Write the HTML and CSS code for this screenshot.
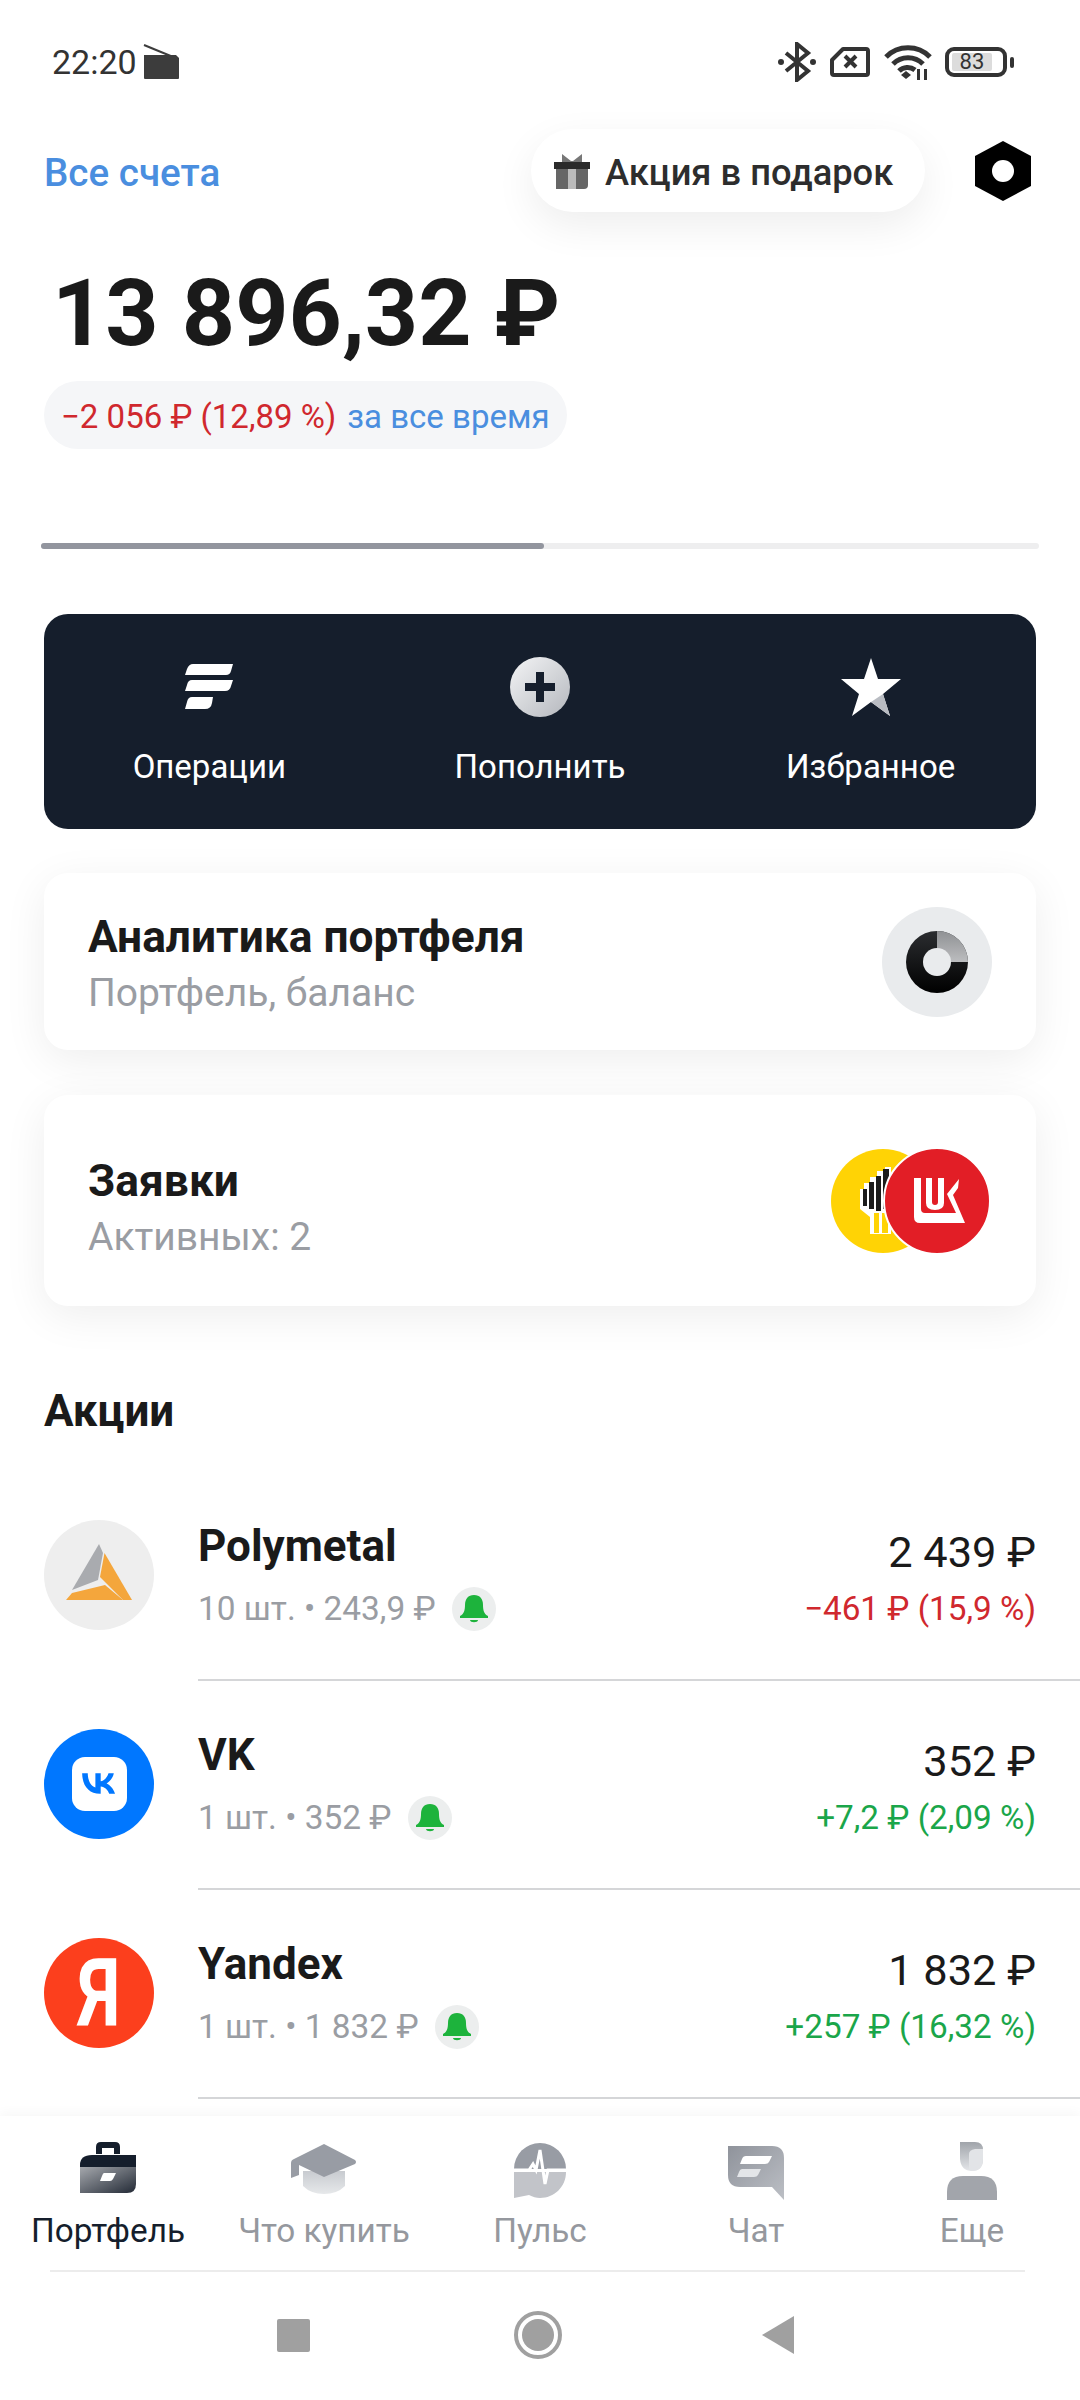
FILE: index.html
```html
<!DOCTYPE html>
<html lang="ru">
<head>
    <meta charset="UTF-8">
    <meta name="viewport" content="width=device-width, initial-scale=1.0">
    <title>Портфель</title>
    <link rel="stylesheet" href="styles.css">
</head>
<body>
<div class="screen">
    <div class="status-bar">
        <div class="status-left">
            <span class="time">22:20</span>
            <svg width="38" height="36" viewBox="0 0 38 36"><path d="M1 1l34 14" stroke="#3c3c3c" stroke-width="2" fill="none"/><path d="M1 11h32l3 3v20a1 1 0 0 1-1 1H2a1 1 0 0 1-1-1z" fill="#3c3c3c"/></svg>
        </div>
        <div class="status-right">
            <svg width="38" height="40" viewBox="0 0 38 40"><path d="M8 11l22 18-11 9V2l11 9-22 18" fill="none" stroke="#333" stroke-width="4"/><circle cx="3" cy="20" r="3" fill="#333"/><circle cx="35" cy="20" r="3" fill="#333"/></svg>
            <svg width="42" height="32" viewBox="0 0 42 32"><path d="M14 3h23a2 2 0 0 1 2 2v22a2 2 0 0 1-2 2H5a2 2 0 0 1-2-2V14z" fill="none" stroke="#333" stroke-width="4" stroke-linejoin="round"/><path d="M16 10l11 11M27 10L16 21" stroke="#333" stroke-width="4"/></svg>
            <svg width="48" height="36" viewBox="0 0 48 36"><path d="M2 13a31 31 0 0 1 44 0M9 20a21 21 0 0 1 30 0M15 27a12 12 0 0 1 16-1" fill="none" stroke="#333" stroke-width="5"/><path d="M17 31l5-4 5 4-5 4z" fill="#333"/><path d="M33 25v11h3V25zM40 25v11h3V25z" fill="#333"/></svg>
            <div class="battery"><div class="battery-body"><span class="battery-level">83</span></div><div class="battery-tip"></div></div>
        </div>
    </div>

    <div class="top-row">
        <a class="accounts-link">Все счета</a>
        <div class="top-actions">
            <div class="gift-pill">
                <svg width="38" height="38" viewBox="0 0 38 38"><path d="M9 2l9 7h2l9-7v9H9z" fill="#777"/><rect x="1" y="10" width="36" height="7" fill="#2b2b2b"/><path d="M3 17h32v16a4 4 0 0 1-4 4H3z" fill="#666"/><path d="M15 17h8v20h-8z" fill="#bbb"/></svg>
                <span>Акция в подарок</span>
            </div>
            <svg class="hex-icon" width="56" height="60" viewBox="0 0 56 60"><path d="M28 0l28 15v30L28 60 0 45V15z" fill="#000"/><circle cx="28" cy="30" r="11" fill="#fff"/></svg>
        </div>
    </div>

    <div class="balance">13 896,32 ₽</div>
    <div class="chip"><span class="red">−2 056 ₽ (12,89 %)</span><span class="blue">за все время</span></div>

    <div class="progress"><div class="progress-fill" style="width: 50.4%"></div></div>

    <div class="actions">
        <div class="action">
            <svg class="action-icon" width="48" height="46" viewBox="0 0 48 46">
                <path d="M8 0h40l-2 7q-1 4-5 4H0l2-6q2-5 6-5zM7 16h41l-2 6q-1 5-6 5H0l2-6q1-5 5-5zM7 33h21l-1 6q-1 6-7 6H0l2-7q1-5 5-5z" fill="#fff"/>
            </svg>
            <span>Операции</span>
        </div>
        <div class="action">
            <svg class="action-icon" width="60" height="60" viewBox="0 0 60 60">
                <defs><linearGradient id="plusFill" x1="0" y1="0" x2="1" y2="1"><stop offset="0" stop-color="#f4f5f6"/><stop offset="1" stop-color="#b4b7bd"/></linearGradient></defs>
                <circle cx="30" cy="30" r="30" fill="url(#plusFill)"/>
                <path d="M26 15h8v11h11v8H34v11h-8V34H15v-8h11z" fill="#151e2c"/>
            </svg>
            <span>Пополнить</span>
        </div>
        <div class="action">
            <svg class="action-icon" width="60" height="58" viewBox="0 0 60 58">
                <path d="M30 0l7 21h23L42 36l7 22-19-14-19 14 7-22L0 21h23z" fill="#fff"/>
                <path d="M42 36l7 22-19-14z" fill="#b9bcc2"/>
            </svg>
            <span>Избранное</span>
        </div>
    </div>

    <div class="card card-analytics">
        <div class="card-text">
            <div class="card-title">Аналитика портфеля</div>
            <div class="card-sub">Портфель, баланс</div>
        </div>
        <div class="donut-wrap">
            <svg width="62" height="62" viewBox="0 0 62 62">
                <defs><linearGradient id="donutDark" x1="0" y1="0" x2="0" y2="1"><stop offset="0" stop-color="#2b2d30"/><stop offset="1" stop-color="#000"/></linearGradient>
                <linearGradient id="donutLight" x1="0" y1="0" x2="0" y2="1"><stop offset="0" stop-color="#8f9194"/><stop offset="1" stop-color="#bcbdbf"/></linearGradient></defs>
                <circle cx="31" cy="31" r="31" fill="url(#donutDark)"/>
                <path d="M31 0a31 31 0 0 1 31 31H31z" fill="url(#donutLight)"/>
                <circle cx="31" cy="31" r="14" fill="#e9ebed"/>
            </svg>
        </div>
    </div>

    <div class="card card-orders">
        <div class="card-text">
            <div class="card-title">Заявки</div>
            <div class="card-sub">Активных: 2</div>
        </div>
        <div class="order-logos">
            <svg class="logo-rosneft" width="104" height="104" viewBox="0 0 104 104">
                <circle cx="52" cy="52" r="52" fill="#ffd305"/>
                <path d="M29 40h4v-6h6v-6h7v-6h8v-4h6v67H39V68l-10-8z" fill="#fff"/>
                <path d="M32 40h4v17h-4zM38 33h5v27h-5zM45 27h5v35h-5zM52 20h6v40h-6z" fill="#1c1c1c"/>
                <path d="M43 64h5v20h-5zM51 64h6v20h-6z" fill="#ffd305"/>
            </svg>
            <svg class="logo-lukoil" width="108" height="108" viewBox="0 0 108 108">
                <circle cx="54" cy="54" r="53" fill="#e21e26" stroke="#fff" stroke-width="2"/>
                <path d="M31 31h7v31q0 4 4 4h31L64 47l12-15-1 9-5 7 12 28H37q-6 0-6-6z" fill="#fff"/>
                <path d="M43 31h6v24q0 3 3 3t3-3V31h6v25q0 7-9 7t-9-7z" fill="#fff"/>
            </svg>
        </div>
    </div>

    <h2 class="section-title">Акции</h2>

    <div class="stocks">
        <div class="stock">
            <div class="stock-logo logo-poly">
                <svg width="110" height="110" viewBox="0 0 110 110">
                    <path d="M55 24l4 9-5 27-26 10z" fill="#a9abaf"/>
                    <path d="M60.500 33L88 80h-9L56 57z" fill="#f4a63c"/>
                    <path d="M61 65l18 15H22l6-7z" fill="#f4a63c"/>
                </svg>
            </div>
            <div class="stock-body">
                <div class="stock-left">
                    <div class="stock-name">Polymetal</div>
                    <div class="stock-sub"><span>10 шт. • 243,9 ₽</span>
                        <span class="bell"><svg width="28" height="30" viewBox="0 0 28 30"><path d="M14 1c6 0 9 4 9 10 0 5 1 9 5 11v2H0v-2c4-2 5-6 5-11C5 5 8 1 14 1z" fill="#1db33c"/><path d="M10 26h8c0 3-8 3-8 0z" fill="#1db33c"/></svg></span>
                    </div>
                </div>
                <div class="stock-right">
                    <div class="stock-price">2 439 ₽</div>
                    <div class="stock-change red">−461 ₽ (15,9 %)</div>
                </div>
            </div>
        </div>
        <div class="stock">
            <div class="stock-logo logo-vk">
                <div class="vk-square">
                    <svg width="37" height="23" viewBox="7 14 36 21"><path d="M25.540 34.500c-10.940 0-17.180-7.500-17.440-19.980h5.480c.18 9.160 4.220 13.040 7.420 13.840V14.520h5.160v7.900c3.160-.34 6.480-3.940 7.600-7.900h5.160c-.86 4.880-4.460 8.480-7.020 9.960 2.560 1.200 6.660 4.340 8.220 10.020h-5.680c-1.220-3.800-4.260-6.740-8.280-7.140v7.140h-.62z" fill="#0077ff"/></svg>
                </div>
            </div>
            <div class="stock-body">
                <div class="stock-left">
                    <div class="stock-name">VK</div>
                    <div class="stock-sub"><span>1 шт. • 352 ₽</span>
                        <span class="bell"><svg width="28" height="30" viewBox="0 0 28 30"><path d="M14 1c6 0 9 4 9 10 0 5 1 9 5 11v2H0v-2c4-2 5-6 5-11C5 5 8 1 14 1z" fill="#1db33c"/><path d="M10 26h8c0 3-8 3-8 0z" fill="#1db33c"/></svg></span>
                    </div>
                </div>
                <div class="stock-right">
                    <div class="stock-price">352 ₽</div>
                    <div class="stock-change green">+7,2 ₽ (2,09 %)</div>
                </div>
            </div>
        </div>
        <div class="stock">
            <div class="stock-logo logo-ya"><span>Я</span></div>
            <div class="stock-body">
                <div class="stock-left">
                    <div class="stock-name">Yandex</div>
                    <div class="stock-sub"><span>1 шт. • 1 832 ₽</span>
                        <span class="bell"><svg width="28" height="30" viewBox="0 0 28 30"><path d="M14 1c6 0 9 4 9 10 0 5 1 9 5 11v2H0v-2c4-2 5-6 5-11C5 5 8 1 14 1z" fill="#1db33c"/><path d="M10 26h8c0 3-8 3-8 0z" fill="#1db33c"/></svg></span>
                    </div>
                </div>
                <div class="stock-right">
                    <div class="stock-price">1 832 ₽</div>
                    <div class="stock-change green">+257 ₽ (16,32 %)</div>
                </div>
            </div>
        </div>
    </div>

    <div class="tab-bar">
        <div class="tabs">
            <div class="tab tab-active">
                <svg width="56" height="60" viewBox="0 0 56 60">
                    <defs><linearGradient id="caseFill" x1="0" y1="0" x2="1" y2="1"><stop offset="0" stop-color="#a5a8ad"/><stop offset="1" stop-color="#232a36"/></linearGradient></defs>
                    <path d="M16 13V6q0-5 5-5h14q5 0 5 5v7h-6V7H22v6z" fill="#151e2c"/>
                    <path d="M12 14h44v12H0v-2q0-10 12-10z" fill="#151e2c"/>
                    <path d="M0 26h56v17q0 9-9 9H0z" fill="url(#caseFill)"/>
                    <path d="M24 32h12l-3 6q-1 2-3 2H20l2-5q1-3 2-3z" fill="#fff"/>
                </svg>
                <span>Портфель</span>
            </div>
            <div class="tab">
                <svg width="66" height="60" viewBox="0 0 66 60">
                    <defs><linearGradient id="capFill" x1="0" y1="0" x2="0" y2="1"><stop offset="0" stop-color="#c8cbd0"/><stop offset="1" stop-color="#e6e8ea"/></linearGradient></defs>
                    <path d="M12 30h42v15q-8 8-21 8t-21-8z" fill="url(#capFill)"/>
                    <path d="M33 3l31 16q2 2 0 4L33 36 8 24v10l-8 3V22q0-3 3-4z" fill="#989ca4"/>
                </svg>
                <span>Что купить</span>
            </div>
            <div class="tab">
                <svg width="54" height="60" viewBox="0 0 54 60">
                    <path d="M1 28a26 26 0 0 1 52 0H1z" fill="#989ca4"/>
                    <path d="M1 31h52c0 15-12 26-26 26-4 0-7-1-11-3l-15 3z" fill="#c2c4c9"/>
                    <path d="M1 29h15l4-6 3 6 4-20 5 34 3-14h21" fill="none" stroke="#fff" stroke-width="3"/>
                </svg>
                <span>Пульс</span>
            </div>
            <div class="tab">
                <svg width="56" height="58" viewBox="0 0 56 58">
                    <defs><linearGradient id="chatFill" x1="0" y1="0" x2="1" y2="1"><stop offset="0" stop-color="#8f939b"/><stop offset="1" stop-color="#bcbfc5"/></linearGradient></defs>
                    <path d="M0 3h44q12 0 12 12v42L44 44H12Q0 44 0 32z" fill="url(#chatFill)"/>
                    <path d="M18 13h26l-3 6q-1 2-4 2H12l2-5q1-3 4-3z" fill="#fff"/>
                    <path d="M14 26h19l-3 6q-1 2-4 2H9l2-5q1-3 3-3z" fill="#e3e5e8"/>
                </svg>
                <span>Чат</span>
            </div>
            <div class="tab">
                <svg width="50" height="60" viewBox="0 0 50 60">
                    <defs><linearGradient id="headFill" x1="0" y1="0" x2="0" y2="1"><stop offset="0" stop-color="#a0a4aa"/><stop offset="1" stop-color="#e4e6e9"/></linearGradient></defs>
                    <path d="M13 1h15q8 0 8 8v9q0 12-11 12T13 18z" fill="url(#headFill)"/>
                    <path d="M22 13q0-4 6-5h8v10q0 12-11 12-3 0-3-3z" fill="#e2e4e7"/>
                    <path d="M0 59v-8q0-16 16-16h18q16 0 16 16v8z" fill="#a2a5ab"/>
                </svg>
                <span>Еще</span>
            </div>
        </div>
        <div class="nav-divider"></div>
        <div class="sys-nav">
            <div class="sys-square"></div>
            <div class="sys-circle"><div class="sys-dot"></div></div>
            <svg width="32" height="38" viewBox="0 0 32 38"><path d="M32 0v38L0 19z" fill="#a0a0a0"/></svg>
        </div>
    </div>
</div>
</body>
</html>
```
FILE: styles.css
```css
* {
    box-sizing: border-box;
}

html, body {
    margin: 0;
    padding: 0;
}

body {
    font-family: Roboto, "Noto Sans", sans-serif;
    background-color: white;
    color: #1a1a1a;
}

.screen {
    width: 1080px;
    height: 2400px;
    overflow: hidden;
    display: flex;
    flex-direction: column;
}

.red {
    color: #d0282e;
}

.green {
    color: #1aa64a;
}

.blue {
    color: #4a8edf;
}

/* status bar */
.status-bar {
    height: 124px;
    flex: none;
    display: flex;
    justify-content: space-between;
    align-items: center;
    padding: 0 66px 0 52px;
}

.status-left {
    display: flex;
    align-items: center;
    gap: 6px;
}

.time {
    font-size: 34px;
    color: #333;
}

.status-right {
    display: flex;
    align-items: center;
    gap: 13px;
}

.battery {
    display: flex;
    align-items: center;
    gap: 3px;
}

.battery-body {
    width: 62px;
    height: 30px;
    border: 4px solid #333;
    border-radius: 9px;
    padding: 2px 3px;
    display: flex;
}

.battery-level {
    width: 83%;
    background-color: #dcdcdc;
    font-size: 22px;
    line-height: 18px;
    text-align: center;
    color: #333;
    border-radius: 2px;
}

.battery-tip {
    width: 4px;
    height: 11px;
    background-color: #333;
    border-radius: 2px;
}

/* top */
.top-row {
    flex: none;
    margin-top: 5px;
    height: 83px;
    padding: 0 44px;
    display: flex;
    justify-content: space-between;
    align-items: center;
}

.accounts-link {
    font-size: 38.6px;
    font-weight: 500;
    color: #4a8edf;
    padding-top: 3px;
}

.top-actions {
    display: flex;
    align-items: center;
    gap: 50px;
    margin-right: 5px;
}

.gift-pill {
    height: 83px;
    width: 394px;
    border-radius: 42px;
    background-color: #fff;
    box-shadow: 0 14px 40px rgba(0, 0, 0, 0.07);
    display: flex;
    align-items: center;
    gap: 14px;
    padding-left: 22px;
    font-size: 36.3px;
    font-weight: 500;
    color: #2d2d2d;
}

.gift-pill span {
    padding-top: 3px;
}

.balance {
    flex: none;
    margin: 52px 0 0 52px;
    height: 100px;
    line-height: 100px;
    font-size: 93px;
    font-weight: 700;
}

.chip {
    flex: none;
    align-self: flex-start;
    margin: 17px 0 0 44px;
    height: 68px;
    border-radius: 34px;
    padding: 2px 17px 0;
    background-color: #f5f6f8;
    display: flex;
    align-items: center;
    gap: 11px;
    font-size: 33px;
}

.progress {
    flex: none;
    margin: 94px 41px 0;
    height: 6px;
    border-radius: 3px;
    background-color: #eeeeef;
}

.progress-fill {
    height: 100%;
    border-radius: 3px;
    background-color: #92959e;
}

/* dark actions */
.actions {
    flex: none;
    margin: 65px 44px 0;
    height: 215px;
    border-radius: 24px;
    background-color: #151e2c;
    display: grid;
    grid-template-columns: repeat(3, 1fr);
}

.action {
    display: flex;
    flex-direction: column;
    align-items: center;
    font-size: 33px;
    color: #fff;
    padding-top: 43px;
}

.action-icon {
    height: 60px;
    margin-bottom: 30px;
}

/* cards */
.card {
    flex: none;
    margin: 44px 44px 0;
    border-radius: 24px;
    background-color: #fff;
    box-shadow: 0 10px 44px rgba(0, 0, 0, 0.07);
    display: flex;
    justify-content: space-between;
    align-items: center;
    padding: 0 44px;
}

.card-analytics {
    height: 177px;
}

.card-orders {
    height: 211px;
    margin-top: 45px;
}

.card-text {
    padding-top: 6px;
}

.card-orders .card-text {
    padding-top: 16px;
}

.card-title {
    font-size: 44.3px;
    font-weight: 700;
    line-height: 50px;
}

.card-sub {
    font-size: 39px;
    line-height: 48px;
    margin-top: 7px;
    color: #9a9da3;
}

.donut-wrap {
    width: 110px;
    height: 110px;
    border-radius: 50%;
    background-color: #e9ebed;
    display: flex;
    align-items: center;
    justify-content: center;
}

.order-logos {
    display: flex;
    align-items: center;
    margin-right: 1px;
}

.logo-lukoil {
    margin-left: -52px;
    position: relative;
}

.section-title {
    flex: none;
    margin: 80px 0 0 44px;
    font-size: 44px;
    font-weight: 700;
    line-height: 50px;
}

/* stocks */
.stocks {
    flex: 1;
    margin-top: 36px;
    overflow: hidden;
}

.stock {
    display: flex;
    align-items: center;
    height: 209px;
    padding-left: 44px;
}

.stock-logo {
    width: 110px;
    height: 110px;
    flex: none;
    border-radius: 50%;
    display: flex;
    align-items: center;
    justify-content: center;
    margin: 0 44px 4px 0;
}

.logo-poly {
    background-color: #eeeeee;
}

.logo-vk {
    background-color: #0077ff;
}

.vk-square {
    width: 55px;
    height: 54px;
    border-radius: 13px;
    background-color: #fff;
    display: flex;
    align-items: center;
    justify-content: center;
}

.logo-ya {
    background-color: #fc3f1d;
    color: #fff;
    font-size: 94px;
    font-weight: 700;
    line-height: 110px;
}

.logo-ya span {
    transform: scaleX(0.76);
}

.stock-body {
    flex: 1;
    height: 100%;
    display: flex;
    justify-content: space-between;
    align-items: center;
    padding-right: 44px;
    border-bottom: 2px solid #d5d6d8;
}

.stock-name {
    font-size: 44px;
    font-weight: 700;
    line-height: 52px;
}

.stock-sub {
    margin-top: 15px;
    display: flex;
    align-items: center;
    gap: 16px;
    font-size: 33.4px;
    line-height: 44px;
    color: #9a9da3;
}

.bell {
    width: 44px;
    height: 44px;
    border-radius: 50%;
    background-color: #eceeee;
    display: flex;
    align-items: center;
    justify-content: center;
}

.stock-right {
    text-align: right;
    padding-top: 6px;
}

.stock-price {
    font-size: 43.4px;
    line-height: 52px;
}

.stock-change {
    margin-top: 8px;
    font-size: 33.3px;
    line-height: 44px;
}

/* bottom */
.tab-bar {
    flex: none;
    height: 284px;
    background-color: #fff;
    box-shadow: 0 -4px 10px rgba(0, 0, 0, 0.03);
}

.tabs {
    height: 154px;
    display: grid;
    grid-template-columns: repeat(5, 216px);
}

.tab {
    display: flex;
    flex-direction: column;
    align-items: center;
    justify-content: flex-end;
    font-size: 33.3px;
    color: #95989e;
    padding-bottom: 20px;
    gap: 10px;
}

.tab-active {
    color: #151e2c;
}

.nav-divider {
    height: 2px;
    margin: 0 55px 0 50px;
    background-color: #ececec;
}

.sys-nav {
    display: flex;
    align-items: center;
    height: 122px;
    padding-left: 277px;
    margin-top: 2px;
}

.sys-square {
    width: 33px;
    height: 33px;
    border-radius: 2px;
    background-color: #a0a0a0;
    margin-right: 204px;
}

.sys-circle {
    width: 48px;
    height: 48px;
    border-radius: 50%;
    border: 4px solid #a0a0a0;
    padding: 4px;
    margin-right: 200px;
}

.sys-dot {
    width: 100%;
    height: 100%;
    border-radius: 50%;
    background-color: #a0a0a0;
}
```
